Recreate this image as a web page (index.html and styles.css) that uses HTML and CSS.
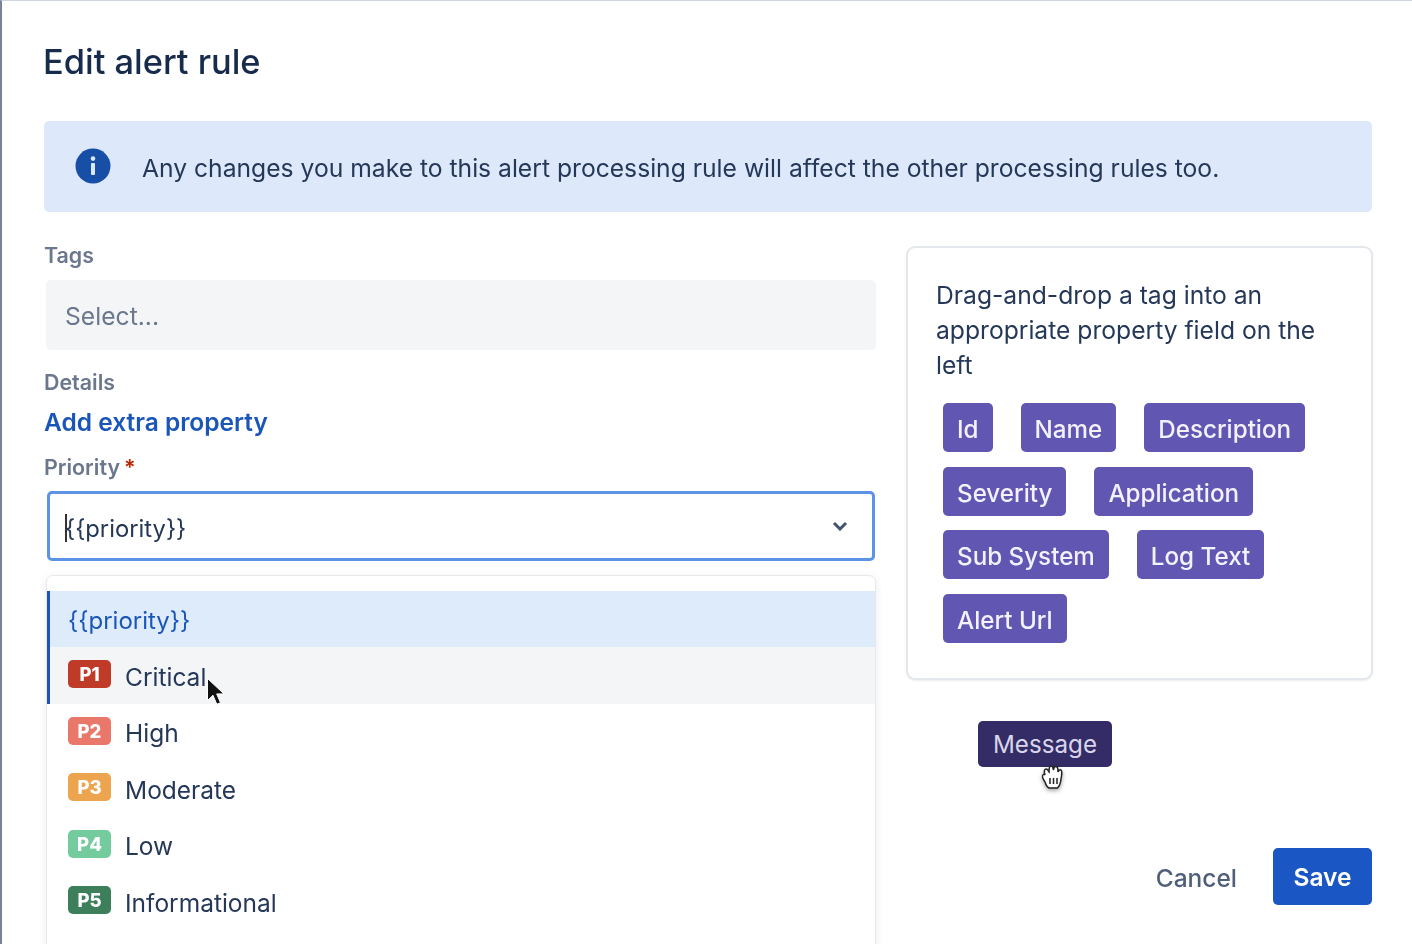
FILE: index.html
```html
<!DOCTYPE html>
<html lang="en">
<head>
<meta charset="utf-8">
<title>Edit alert rule</title>
<link rel="stylesheet" href="styles.css">
</head>
<body>
<main class="modal">
  <h1 class="title">Edit alert rule</h1>
  <div class="banner">
    <svg class="info-icon" viewBox="0 0 36 36" aria-hidden="true">
      <circle cx="18" cy="18" r="17.5" fill="#174ea6"/>
      <circle cx="18" cy="10.6" r="2.3" fill="#dde8fb"/>
      <rect x="16" y="15" width="4" height="12" rx="1" fill="#dde8fb"/>
    </svg>
    <p class="banner-text">Any changes you make to this alert processing rule will affect the other processing rules too.</p>
  </div>
  <div class="columns">
    <section class="form">
      <div class="label label-tags">Tags</div>
      <div class="select-empty">Select...</div>
      <div class="label label-details">Details</div>
      <a class="add-link">Add extra property</a>
      <div class="label label-priority">Priority<span class="req">*</span></div>
      <div class="select-focus">
        <span class="caret"></span><span class="select-value">{{priority}}</span>
        <svg class="chevron" viewBox="0 0 16 10" aria-hidden="true"><path d="M2 2l6 6 6-6" fill="none" stroke="#42526e" stroke-width="3"/></svg>
      </div>
      <div class="menu">
        <div class="option option-selected">{{priority}}</div>
        <div class="option option-hover"><span class="badge p1">P1</span>Critical</div>
        <div class="option"><span class="badge p2">P2</span>High</div>
        <div class="option"><span class="badge p3">P3</span>Moderate</div>
        <div class="option"><span class="badge p4">P4</span>Low</div>
        <div class="option"><span class="badge p5">P5</span>Informational</div>
      </div>
      <svg class="cursor-arrow" viewBox="0 0 18 30" aria-hidden="true">
        <path d="M1.5 1.5v22l5.500-5.200 3.800 9 3.700-1.600-3.800-8.800h7.300z" fill="#111" stroke="#fff" stroke-width="1"/>
      </svg>
    </section>
    <aside class="side">
      <div class="card">
        <p class="card-text">Drag-and-drop a tag into an appropriate property field on the left</p>
        <div class="tags">
          <span class="tag">Id</span>
          <span class="tag">Name</span>
          <span class="tag">Description</span>
          <span class="tag">Severity</span>
          <span class="tag">Application</span>
          <span class="tag">Sub System</span>
          <span class="tag">Log Text</span>
          <span class="tag">Alert Url</span>
        </div>
      </div>
      <div class="footer">
        <span class="drag-tag">Message</span>
        <svg class="cursor-hand" viewBox="0 0 26 28" aria-hidden="true">
          <path d="M5 12c-1-3-1-6 1-6s2 2 3 3c0-3 0-6 2-6s2 2 2.500 4c.2-2 1-4 2.800-3.500S18 6 18 9c.5-1.500 2-3 3-2s1 3 .5 6l-1 6c-.5 3-2 5-3 6H9c-2-1-3-3-4-6-1-2-3-4-2.500-6S4 11 5 12z" fill="#fff" stroke="#222" stroke-width="1.500"/>
          <path d="M10 15v6M13.500 15v6M17 15v6" stroke="#222" stroke-width="1.500"/>
        </svg>
        <span class="cancel">Cancel</span>
        <button class="save">Save</button>
      </div>
    </aside>
  </div>
</main>
</body>
</html>
```
FILE: styles.css
```css
* { box-sizing: border-box; }
html, body { margin: 0; height: 944px; overflow: hidden; background: #fff; }
body { font-family: Inter, "Liberation Sans", sans-serif; color: #172b4d; }
.modal {
  height: 944px;
  overflow: hidden;
  padding: 0 40px 0 42px;
  border-left: 2px solid #76839b;
  border-top: 1px solid #cfd6e2;
  filter: blur(.4px);
}
.title {
  margin: 0 0 0 -1px;
  padding-top: 41px;
  height: 120px;
  font-size: 34.400px;
  line-height: 40px;
  font-weight: 500;
  color: #172b4d;
}
.banner {
  display: flex;
  align-items: center;
  height: 91px;
  padding-left: 31px;
  background: #dde8fb;
  border-radius: 5px;
}
.info-icon { width: 36px; height: 36px; flex: none; margin-top: -1px; }
.banner-text { margin: 2px 0 0 31px; font-size: 24.660px; line-height: 34px; color: #253858; }
.columns { display: flex; gap: 30px; padding-top: 34px; }
.form { position: relative; width: 832px; flex: none; }
.label { font-size: 21.400px; line-height: 26px; font-weight: 600; color: #6b778c; }
.label-tags { margin-top: -4px; }
.select-empty {
  height: 70px;
  margin: 12px 0 0 2px;
  padding-left: 19px;
  background: #f4f5f7;
  border-radius: 5px;
  font-size: 24.660px;
  line-height: 73px;
  color: #6b778c;
}
.label-details { margin-top: 19px; }
.add-link { display: block; margin-top: 12px; font-size: 24.500px; line-height: 30px; font-weight: 600; color: #1a56b8; }
.label-priority { margin-top: 17px; }
.req { margin-left: 4px; color: #bf2600; }
.select-focus {
  display: flex;
  align-items: center;
  height: 70px;
  margin: 11px 1px 0 3px;
  padding: 4px 24px 0 15px;
  background: #fff;
  border: 3px solid #5d93e6;
  border-radius: 5px;
  font-size: 23.800px;
  color: #253858;
}
.caret { width: 2px; height: 28px; margin-right: -2px; background: #333; flex: none; }
.select-value { flex: 1; }
.chevron { width: 16px; height: 10px; flex: none; margin-top: -4px; }
.menu {
  margin: 14px 0 0 2px;
  padding: 14.500px 0 40px;
  background: #fff;
  border: 1px solid #e6e8ec;
  border-radius: 7px;
  box-shadow: 0 2px 8px rgba(9, 30, 66, .08);
}
.option {
  display: flex;
  align-items: center;
  height: 56.500px;
  padding: 3px 0 0 18px;
  font-size: 24.500px;
  color: #253858;
  border-left: 3px solid transparent;
}
.option-selected { background: #deebfb; color: #1a56b8; border-left-color: #1a56b8; font-size: 24px; }
.option-hover { background: #f4f5f7; border-left-color: #1a56b8; }
.badge {
  width: 43px;
  height: 28px;
  margin: -5px 14px 0 0;
  border-radius: 5px;
  flex: none;
  color: #fff;
  font-size: 18.500px;
  font-weight: 800;
  line-height: 28px;
  text-align: center;
}
.p1 { background: #bf3b27; }
.p2 { background: #e9776a; }
.p3 { background: #eda44f; }
.p4 { background: #74cc9e; }
.p5 { background: #3c7f5a; }
.cursor-arrow { position: absolute; left: 162px; top: 431px; width: 18px; height: 30px; }
.side { flex: 1; margin-right: -1px; }
.card {
  height: 434px;
  padding: 30px 20px 0 28px;
  background: #fff;
  border: 2px solid #e4e7ec;
  border-radius: 9px;
  box-shadow: 0 1px 2px rgba(9, 30, 66, .08);
}
.card-text { margin: 0; font-size: 24.650px; line-height: 35px; color: #253858; }
.tags { display: flex; flex-wrap: wrap; gap: 14.600px 28px; margin: 20px 0 0 7px; }
.tag {
  height: 49px;
  padding: 0 14px;
  background: #6157b3;
  border-radius: 5px;
  color: #f3f1fb;
  font-size: 24.200px;
  line-height: 54px;
  font-weight: 500;
}
.footer {
  position: relative;
  display: flex;
  justify-content: flex-end;
  align-items: center;
  gap: 36px;
  margin: 168px 1px 0 0;
  height: 57px;
}
.drag-tag {
  position: absolute;
  left: 72px;
  top: -127px;
  width: 134px;
  height: 46px;
  background: #332c66;
  border-radius: 5px;
  color: #d9d6ec;
  font-size: 24.200px;
  line-height: 47px;
  text-align: center;
}
.cursor-hand { position: absolute; left: 134px; top: -85px; width: 26px; height: 28px; filter: drop-shadow(0 2px 2px rgba(0, 0, 0, .35)); }
.cancel { padding-top: 2px; font-size: 24.500px; font-weight: 500; color: #505f79; }
.save {
  width: 99px;
  height: 57px;
  padding-top: 1px;
  background: #1a56c4;
  border: 0;
  border-radius: 5px;
  color: #fff;
  font: 600 24.500px Inter, "Liberation Sans", sans-serif;
}
```
